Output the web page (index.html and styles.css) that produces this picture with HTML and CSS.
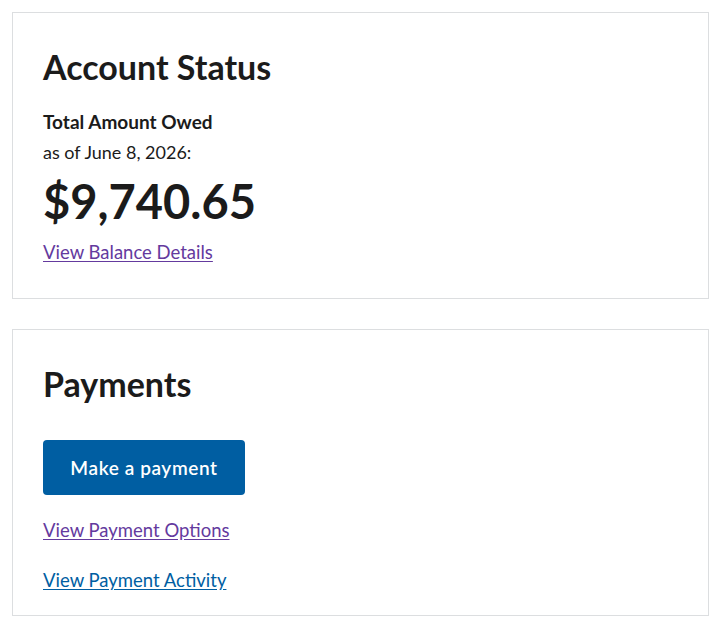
FILE: index.html
```html
<!DOCTYPE html>
<html lang="en">
<head>
<meta charset="utf-8">
<title>Account</title>
<link rel="stylesheet" href="styles.css">
</head>
<body>
<main class="page">
  <section class="card">
    <h2 class="card-title">Account Status</h2>
    <p class="label">Total Amount Owed</p>
    <p class="asof">as of June 8, 2026:</p>
    <p class="amount">$9,740.65</p>
    <a class="link visited" href="#balance">View Balance Details</a>
  </section>
  <section class="card">
    <h2 class="card-title">Payments</h2>
    <a class="button" href="#pay">Make a payment</a>
    <ul class="links">
      <li><a class="link visited" href="#options">View Payment Options</a></li>
      <li><a class="link" href="#activity">View Payment Activity</a></li>
    </ul>
  </section>
</main>
</body>
</html>
```
FILE: styles.css
```css
html, body {
  margin: 0;
  padding: 0;
  background: #ffffff;
}
body {
  font-family: "Lato", "Liberation Sans", sans-serif;
  color: #1b1b1b;
}
.page {
  padding: 12px 13px 12px 12px;
  display: flex;
  flex-direction: column;
  gap: 30px;
}
.card {
  border: 1px solid #dcdee0;
  padding: 30px 30px 0 30px;
  box-sizing: border-box;
  height: 287px;
}
.card-title {
  margin: 2px 0 0;
  font-size: 34px;
  line-height: 44px;
  font-weight: 700;
}
.label {
  margin: 20px 0 0;
  font-size: 19px;
  line-height: 26px;
  font-weight: 700;
}
.asof {
  margin: 4px 0 0;
  font-size: 18px;
  line-height: 26px;
}
.amount {
  margin: 10px 0 0;
  font-size: 47px;
  line-height: 52px;
  font-weight: 700;
}
.link {
  font-size: 18.5px;
  line-height: 26px;
  color: #005ea2;
  text-decoration: underline;
  text-underline-offset: 2px;
}
.link.visited {
  color: #643a9e;
}
.card > .link {
  display: inline-block;
  margin-top: 12px;
}
.button {
  display: inline-flex;
  align-items: center;
  justify-content: center;
  margin-top: 34px;
  width: 202px;
  height: 55px;
  box-sizing: border-box;
  background: #005ea2;
  color: #ffffff;
  border-radius: 4px;
  font-size: 19px;
  font-weight: 600;
  letter-spacing: 0.6px;
  text-decoration: none;
}
.links {
  list-style: none;
  margin: 22px 0 0;
  padding: 0;
  display: flex;
  flex-direction: column;
  gap: 24px;
}
```
